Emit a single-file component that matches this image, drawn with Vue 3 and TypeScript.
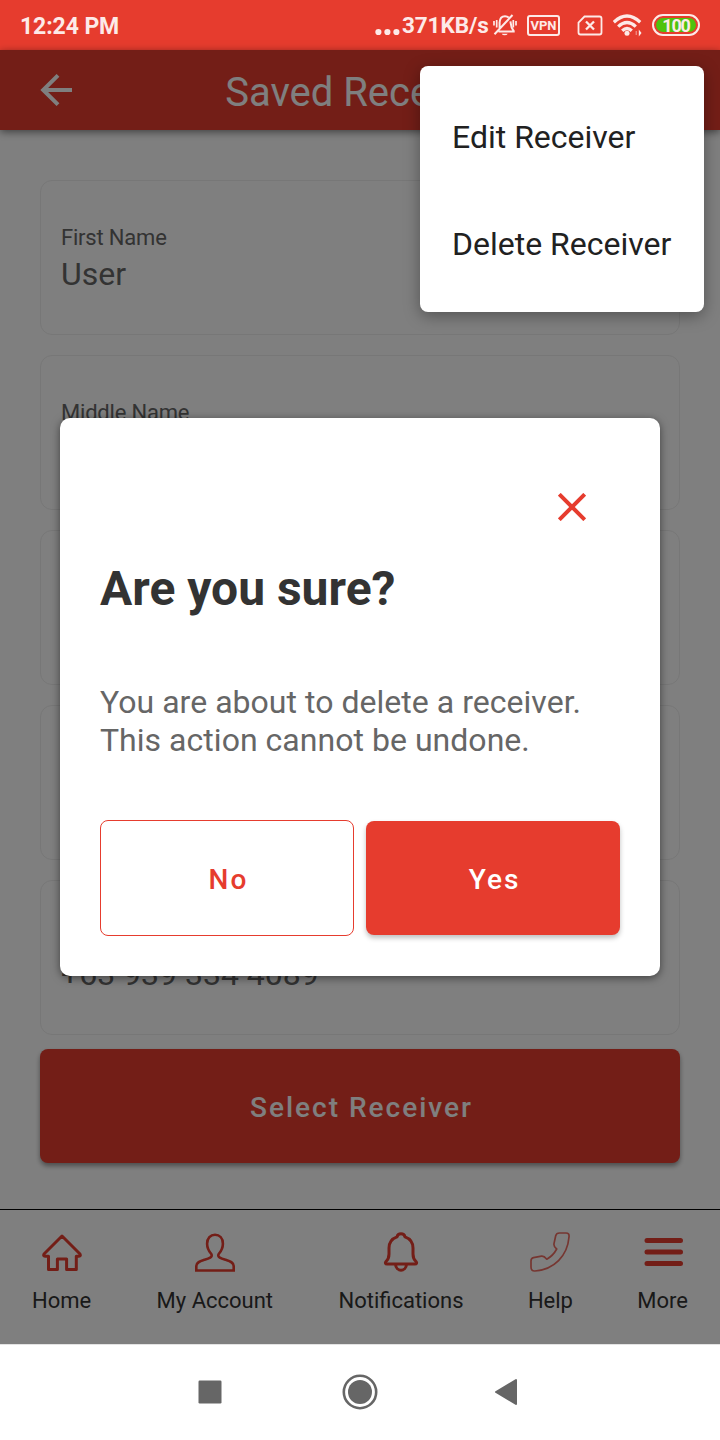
<script setup lang="ts">
interface Field {
  id: number
  label: string
  value: string
}

const fields: Field[] = [
  { id: 1, label: 'First Name', value: 'User' },
  { id: 2, label: 'Middle Name', value: '' },
  { id: 3, label: '', value: '' },
  { id: 4, label: '', value: '' },
  { id: 5, label: '', value: '+63 939 334 4089' },
]

const menuItems: string[] = ['Edit Receiver', 'Delete Receiver']
</script>

<template>
  <div class="screen">
    <header class="status">
      <span class="clock">12:24 PM</span>
      <div class="indicators">
        <svg class="dots" width="26" height="8" viewBox="0 0 26 8" fill="#fdeae8">
          <circle cx="3.4" cy="4" r="3.1" /><circle cx="12.4" cy="4" r="3.1" /><circle cx="21.4" cy="4" r="3.1" />
        </svg>
        <span class="speed">371KB/s</span>
        <svg class="mute" width="24" height="24" viewBox="0 0 24 24" fill="none" stroke="#fdeae8" stroke-width="2">
          <path d="M5.500 18.500h16.200M6.600 15V9.500C6.800 5.500 9 3.200 12 3.200c1.500 0 2.700.4 3.700 1.300M17.500 8.300c.4 3.500.1 6.200 3.300 9.800M1.500 21.200 19.500 2" />
          <path d="M8.700 20.700a3.200 2.500 0 0 0 6 0z" fill="#fdeae8" stroke="none" />
          <path d="M1 8v4.500M3.700 7v7.500M20.300 7v7.500M23 8v4.500" stroke-width="1.700" />
        </svg>
        <span class="vpn">VPN</span>
        <svg class="sim" width="26" height="21" viewBox="0 0 26 21" fill="none" stroke="#fdeae8" stroke-width="2.300">
          <path d="M7.500 1.500h15q2 0 2 2v14q0 2-2 2h-19q-2 0-2-2V7.500z" stroke-width="1.800" />
          <path d="m9 6.500 8 8M17 6.500l-8 8" />
        </svg>
        <svg class="wifi" width="30" height="23" viewBox="0 0 30 23" fill="none" stroke="#fdeae8" stroke-width="3.300">
          <path d="M.8 8.200Q14-4 27.200 8.200M5.200 12.600Q14 4.600 22.800 12.600M9.200 16.800Q14 12.400 18.800 16.800" />
          <circle cx="14" cy="19.300" r="2.500" fill="#fdeae8" stroke="none" />
          <path d="M23.200 17v4" stroke-width="1" stroke-opacity=".6" />
          <path d="M25.800 15.500v7l2.700-3.500z" fill="#fdeae8" stroke="none" />
        </svg>
        <span class="battery"><span class="charge">100</span></span>
      </div>
    </header>

    <main class="app">
      <div class="appbar">
        <svg class="back" width="32" height="32" viewBox="0 0 32 32" fill="none" stroke="#fff" stroke-width="4">
          <path d="M32 16H3M18 1.400 3.200 16 18 30.600" />
        </svg>
        <h1>Saved Receiver</h1>
      </div>

      <section class="form">
        <div v-for="field in fields" :key="field.id" class="card">
          <div class="label">{{ field.label }}</div>
          <div class="value">{{ field.value }}</div>
        </div>
        <button class="select">Select Receiver</button>
      </section>

      <nav class="tabs">
        <div class="tab home">
          <svg width="40" height="40" viewBox="0 0 40 40" fill="none" stroke="#e63c2e" stroke-width="3" stroke-linejoin="round">
            <path d="M20 4 38 22q1 2.300-1 2.300h-2.700V37.500H24.600V27h-9.200v10.500H6.500V24.300H3q-2 0-1-2.300z" />
          </svg>
          <span>Home</span>
        </div>
        <div class="tab account">
          <svg width="40" height="40" viewBox="0 0 40 40" fill="none" stroke="#e63c2e" stroke-width="2.600">
            <path d="M1.300 38.500V34c0-4 4-5 8-6.200s9-2.600 7-5.800c-3-3.500-4.200-6.500-4.200-10.300C12.100 6 15.500 2.800 20 2.800s7.900 3.200 7.900 8.900c0 3.800-1.200 6.800-4.200 10.300-2 3.200 3 4.600 7 5.800s8 2.200 8 6.200v4.500z" />
          </svg>
          <span>My Account</span>
        </div>
        <div class="tab alerts">
          <svg width="40" height="40" viewBox="0 0 40 40" fill="none" stroke="#e63c2e" stroke-width="3" stroke-linecap="round" stroke-linejoin="round">
            <path d="M16 4.800C17 .8 23 .8 24 4.800c5.500 2 8 6 8 11.200v6c0 4 1 5.700 3 7.500 1.300 1.500.5 2.500-1 2.500H6c-1.500 0-2.300-1-1-2.500 2-1.800 3-3.500 3-7.500v-6c0-5.200 2.500-9.200 8-11.200zM14.500 32.500c.5 7.500 10.500 7.500 11 0" />
          </svg>
          <span>Notifications</span>
        </div>
        <div class="tab help">
          <svg width="40" height="40" viewBox="0 0 40 40" fill="none" stroke="#e63c2e" stroke-opacity=".75" stroke-width="1.700" stroke-linejoin="round">
            <path d="M29.500 1H36c2.500 0 3.300 1.500 3 4C37.500 24 24 37.500 5 39c-2.700.2-4-1-4-4v-6c0-2 .7-2.900 2.500-3.300l8-1.500c2.500-.4 3.500.8 5.300 3 4-2.200 7.500-5.700 9.900-10.200-2.200-1.800-3.200-2.800-2.700-5.300l1.700-8C26.200 1.700 27.200 1 29.500 1z" />
          </svg>
          <span>Help</span>
        </div>
        <div class="tab more">
          <svg width="40" height="40" viewBox="0 0 40 40" stroke="#e63c2e" stroke-width="5" stroke-linecap="round">
            <path d="M4 8.500h33.500M4 20h33.500M4 31.500h33.500" />
          </svg>
          <span>More</span>
        </div>
      </nav>
      <div class="scrim"></div>
    </main>

    <footer class="system">
      <svg width="24" height="24" viewBox="0 0 24 24"><rect x=".5" y=".5" width="23" height="23" rx="1.200" fill="#666" /></svg>
      <svg width="36" height="36" viewBox="0 0 36 36"><circle cx="18" cy="18" r="16.200" fill="none" stroke="#666" stroke-width="2.600" /><circle cx="18" cy="18" r="12" fill="#666" /></svg>
      <svg width="24" height="28" viewBox="0 0 24 28"><path d="M2 14 22 2v24z" fill="#666" stroke="#666" stroke-width="2" stroke-linejoin="round" /></svg>
    </footer>

    <div class="menu">
      <div v-for="item in menuItems" :key="item" class="item">{{ item }}</div>
    </div>

    <div class="dialog">
      <svg class="close" width="28" height="28" viewBox="0 0 28 28" stroke="#e63c2e" stroke-width="4">
        <path d="m1.300 1.300 25.400 25.400M26.700 1.300 1.300 26.700" />
      </svg>
      <h2>Are you sure?</h2>
      <p>You are about to delete a receiver.<br />This action cannot be undone.</p>
      <div class="actions">
        <button class="no">No</button>
        <button class="yes">Yes</button>
      </div>
    </div>
  </div>
</template>

<style>
body {
  margin: 0;
}
</style>

<style scoped>
* {
  box-sizing: border-box;
}
.screen {
  position: relative;
  display: flex;
  flex-direction: column;
  width: 720px;
  height: 1440px;
  overflow: hidden;
  background: #fff;
  font-family: Roboto, "Liberation Sans", sans-serif;
}
svg {
  display: block;
  flex: none;
}
h1, h2, p {
  margin: 0;
}
button {
  font-family: inherit;
  font-size: 28px;
  font-weight: 500;
  letter-spacing: 2px;
  padding: 3px 0 0 3px;
  border: 0;
  border-radius: 8px;
}
.status {
  display: flex;
  justify-content: space-between;
  height: 50px;
  padding: 0 20px;
  background: #e63c2e;
  color: #fdeae8;
  font-size: 23px;
  font-weight: 700;
  line-height: 54px;
}
.clock {
  letter-spacing: -0.1px;
}
.indicators {
  display: flex;
  align-items: center;
}
.dots {
  margin: 13px 1px 0 0;
}
.speed {
  width: 91px;
  font-size: 22.5px;
  letter-spacing: -0.1px;
  white-space: nowrap;
}
.mute {
  margin-right: 10px;
}
.vpn {
  width: 33px;
  height: 21px;
  margin-right: 17px;
  border: 2px solid #fdeae8;
  border-radius: 3px;
  font-size: 13px;
  font-weight: 700;
  line-height: 18px;
  text-align: center;
}
.sim {
  margin-right: 10px;
}
.wifi {
  margin-right: 9px;
}
.battery {
  width: 48px;
  height: 22px;
  padding: 2px;
  border: 2px solid #fdeae8;
  border-radius: 11px;
}
.charge {
  display: block;
  height: 14px;
  border-radius: 7px;
  background: #4fc20d;
  font-size: 18px;
  letter-spacing: -1.2px;
  line-height: 15px;
  text-align: center;
}
.app {
  position: relative;
  display: flex;
  flex-direction: column;
  height: 1294px;
}
.appbar {
  display: flex;
  align-items: center;
  height: 80px;
  padding: 0 40px;
  background: #e63c2e;
  box-shadow: 0 2px 8px rgba(0, 0, 0, 0.5);
}
h1 {
  flex: 1;
  padding: 4px 32px 0 0;
  color: #fff;
  font-size: 40px;
  font-weight: 400;
  text-align: center;
}
.form {
  display: flex;
  flex-direction: column;
  height: 1079px;
  padding: 50px 40px 0;
}
.card {
  height: 155px;
  margin-bottom: 20px;
  padding: 43px 20px 0;
  border: 1px solid #eee;
  border-radius: 12px;
  color: #666;
}
.card:nth-child(5) {
  margin-bottom: 14px;
}
.label {
  height: 28px;
  font-size: 22px;
  letter-spacing: -0.2px;
  line-height: 28px;
}
.value {
  font-size: 32px;
  line-height: 45px;
}
.select {
  height: 114px;
  background: #e63c2e;
  color: #fff;
  box-shadow: 0 3px 5px rgba(0, 0, 0, 0.4);
}
.tabs {
  display: flex;
  justify-content: space-between;
  height: 135px;
  padding: 22px 32px 0;
  border-top: 1px solid #000;
  color: #333;
  font-size: 22px;
}
.tab {
  display: flex;
  flex-direction: column;
  align-items: center;
  gap: 16px;
  line-height: 26px;
}
.account,
.alerts {
  padding-left: 1px;
}
.scrim {
  position: absolute;
  inset: 0;
  background: rgba(0, 0, 0, 0.5);
}
.system {
  display: flex;
  align-items: center;
  justify-content: space-between;
  height: 96px;
  padding: 0 202px 1px 198px;
  border-top: 1px solid #e3e3e3;
}
.system svg:nth-child(2) {
  margin-left: 3px;
}
.menu {
  position: absolute;
  top: 66px;
  left: 420px;
  width: 284px;
  height: 246px;
  padding: 18px 32px 14px;
  border-radius: 8px;
  background: #fff;
  box-shadow: 0 4px 16px rgba(0, 0, 0, 0.35);
}
.item {
  height: 107px;
  color: #212121;
  font-size: 32px;
  line-height: 107px;
  white-space: nowrap;
}
.dialog {
  position: absolute;
  top: 418px;
  left: 60px;
  width: 600px;
  height: 558px;
  padding: 75px 40px 0;
  border-radius: 10px;
  background: #fff;
  box-shadow: 0 2px 8px rgba(0, 0, 0, 0.5);
}
.close {
  margin-left: 458px;
}
h2 {
  margin-top: 37px;
  color: #333;
  font-size: 48px;
  line-height: 62px;
}
p {
  margin-top: 63px;
  color: #666;
  font-size: 32px;
  letter-spacing: 0.03px;
  line-height: 38px;
  white-space: nowrap;
}
.actions {
  display: flex;
  align-items: center;
  gap: 12px;
  margin-top: 61px;
}
.no {
  width: 254px;
  height: 116px;
  border: 1px solid #e63c2e;
  background: #fff;
  color: #e63c2e;
}
.yes {
  width: 254px;
  height: 114px;
  background: #e63c2e;
  color: #fff;
  box-shadow: 0 3px 5px rgba(0, 0, 0, 0.25);
}
</style>
